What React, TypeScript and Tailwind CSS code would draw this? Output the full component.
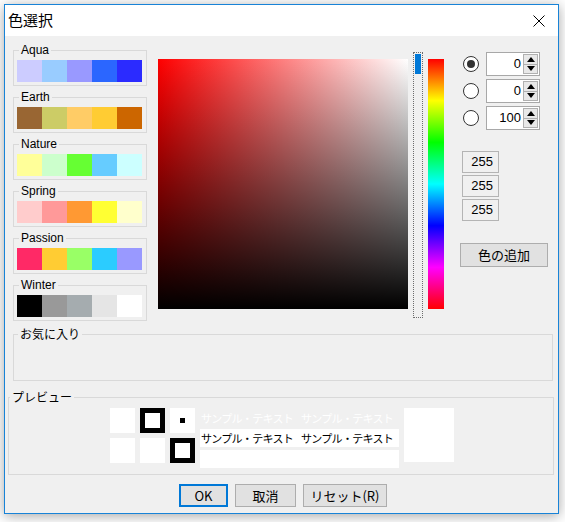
const PALETTES: { name: string; colors: string[] }[] = [
  { name: 'Aqua', colors: ['#ccccff', '#99ccff', '#9999ff', '#2b66ff', '#2b2bff'] },
  { name: 'Earth', colors: ['#996633', '#cccc66', '#ffcc66', '#ffcc33', '#cc6600'] },
  { name: 'Nature', colors: ['#ffff99', '#ccffcc', '#66ff33', '#66ccff', '#ccffff'] },
  { name: 'Spring', colors: ['#ffcccc', '#ff9999', '#ff9933', '#ffff33', '#ffffcc'] },
  { name: 'Passion', colors: ['#ff2966', '#ffcc33', '#99ff66', '#2bccff', '#9999ff'] },
  { name: 'Winter', colors: ['#000000', '#999999', '#a5acaf', '#e5e5e5', '#ffffff'] },
];

const HSB = [
  { value: '0', checked: true },
  { value: '0', checked: false },
  { value: '100', checked: false },
];

const SAMPLE = 'サンプル・テキスト';

function Arrow({ up }: { up: boolean }) {
  return (
    <svg width="8" height="5" viewBox="0 0 8 5">
      <polygon points={up ? '0,5 8,5 4,0' : '0,0 8,0 4,5'} fill="#000" />
    </svg>
  );
}

function SpinBox({ value }: { value: string }) {
  return (
    <div className="flex w-[54px] h-[24px] border border-[#a8a8a8] bg-white">
      <div className="flex-1 text-right pr-[2px] text-[13px] leading-[22px]">{value}</div>
      <div className="flex flex-col w-[16px] py-[1px] pr-[1px]">
        <div className="flex-1 flex items-center justify-center bg-[#e8e8e8] border border-[#b0b0b0]">
          <Arrow up />
        </div>
        <div className="flex-1 flex items-center justify-center bg-[#e8e8e8] border border-t-0 border-[#b0b0b0]">
          <Arrow up={false} />
        </div>
      </div>
    </div>
  );
}

function Radio({ checked }: { checked: boolean }) {
  return (
    <div className="w-[16px] h-[16px] rounded-full border border-[#333] bg-white flex items-center justify-center">
      {checked && <div className="w-[8px] h-[8px] rounded-full bg-[#333]" />}
    </div>
  );
}

function SampleLine() {
  return (
    <div className="flex gap-[8px]">
      <span>{SAMPLE}</span>
      <span>{SAMPLE}</span>
    </div>
  );
}

export default function App() {
  return (
    <div className="w-[565px] h-[522px] bg-white pt-[4px] pl-[4px] text-black font-[family-name:'Liberation_Sans','Noto_Sans_CJK_JP',sans-serif]">
      <div className="w-[555px] h-[510px] border border-[#1883d7] bg-[#f0f0f0] shadow-[0_2px_12px_rgba(0,0,0,0.35)] flex flex-col">
        <div className="h-[31px] bg-white flex items-center justify-between pl-[3px] pr-[13px]">
          <span className="text-[15px] font-['Noto_Sans_CJK_JP',sans-serif]">色選択</span>
          <svg width="12" height="12" viewBox="0 0 12 12" className="mt-[1px]">
            <path d="M0.5 0.5 L11.5 11.5 M11.5 0.5 L0.5 11.5" stroke="#000" strokeWidth="1" />
          </svg>
        </div>

        <div className="flex items-start pt-[7px] pl-[8px]">
          <div className="w-[134px] flex flex-col gap-[4px]">
            {PALETTES.map((p) => (
              <fieldset key={p.name} className="border border-[#d9d9d9] px-[3px] pt-[3px] pb-[3px]">
                <legend className="ml-[2px] px-[2px] text-[12px] leading-[14px]">{p.name}</legend>
                <div className="flex">
                  {p.colors.map((c, i) => (
                    <div key={i} className="w-[25px] h-[22px]" style={{ backgroundColor: c }} />
                  ))}
                </div>
              </fieldset>
            ))}
          </div>

          <div className="ml-[11px] mt-[16px] w-[250px] h-[250px] bg-[linear-gradient(to_right,#ff0000,#ffffff)]">
            <div className="w-full h-full bg-[linear-gradient(to_bottom,rgba(0,0,0,0),#000000)]" />
          </div>

          <div className="ml-[5px] mt-[9px] w-[10px] h-[266px] border border-dotted border-[#6d6d6d] pl-[1px] pt-[1px]">
            <div className="w-[6px] h-[20px] bg-[#0078d7]" />
          </div>

          <div className="ml-[5px] mt-[16px] w-[16px] h-[250px] bg-[linear-gradient(to_bottom,#ff0000,#ffff00,#00ff00,#00ffff,#0000ff,#ff00ff,#ff0000)]" />

          <div className="ml-[19px] mt-[9px] flex flex-col items-start">
            <div className="flex flex-col gap-[3px]">
              {HSB.map((h, i) => (
                <div key={i} className="flex items-center h-[24px]">
                  <Radio checked={h.checked} />
                  <div className="ml-[7px]">
                    <SpinBox value={h.value} />
                  </div>
                </div>
              ))}
            </div>
            <div className="mt-[21px] ml-[-1px] flex flex-col gap-[2px]">
              {['255', '255', '255'].map((v, i) => (
                <div key={i} className="w-[37px] h-[22px] border border-[#b4b4b4] text-right pr-[5px] text-[13px] leading-[20px]">
                  {v}
                </div>
              ))}
            </div>
            <button className="mt-[22px] ml-[-3px] w-[88px] h-[24px] bg-[#e1e1e1] border border-[#adadad] text-[13px] leading-[22px] font-['Noto_Sans_CJK_JP',sans-serif]">
              色の追加
            </button>
          </div>
        </div>

        <fieldset className="ml-[8px] mt-[6px] w-[540px] h-[54px] border border-[#d9d9d9]">
          <legend className="ml-[4px] px-[2px] text-[12px] leading-[14px] font-['Noto_Sans_CJK_JP',sans-serif]">お気に入り</legend>
        </fieldset>

        <fieldset className="ml-[3px] mt-[9px] w-[546px] h-[85px] border border-[#d9d9d9]">
          <legend className="ml-[1px] px-[2px] text-[12px] leading-[14px] font-['Noto_Sans_CJK_JP',sans-serif]">プレビュー</legend>
          <div className="flex items-start pt-[4px] pl-[101px]">
            <div className="grid grid-cols-[25px_25px_25px] grid-rows-[25px_25px] gap-[5px]">
              <div className="bg-white" />
              <div className="border-[5px] border-black bg-white" />
              <div className="bg-white flex items-center justify-center">
                <div className="w-[5px] h-[5px] bg-black" />
              </div>
              <div className="bg-white" />
              <div className="bg-white" />
              <div className="border-[5px] border-black bg-white" />
            </div>
            <div className="ml-[5px] w-[199px] flex flex-col text-[11px] font-['Noto_Sans_CJK_JP',sans-serif] tracking-[-0.7px] whitespace-nowrap overflow-hidden">
              <div className="h-[20px] leading-[20px] text-white pl-[1px]">
                <SampleLine />
              </div>
              <div className="mt-[1px] h-[18px] leading-[18px] bg-white pl-[1px]">
                <SampleLine />
              </div>
              <div className="mt-[3px] h-[18px] bg-white" />
            </div>
            <div className="ml-[5px] w-[50px] h-[54px] bg-white" />
          </div>
        </fieldset>

        <div className="mt-[9px] pl-[174px] flex items-start text-[13px] font-['Noto_Sans_CJK_JP',sans-serif]">
          <button className="w-[49px] h-[23px] bg-[#e1e1e1] border-2 border-[#0078d7] leading-[19px]">OK</button>
          <button className="ml-[7px] w-[61px] h-[23px] bg-[#e1e1e1] border border-[#adadad] leading-[21px]">取消</button>
          <button className="ml-[7px] w-[84px] h-[23px] bg-[#e1e1e1] border border-[#adadad] leading-[21px]">リセット(R)</button>
        </div>
      </div>
    </div>
  );
}
